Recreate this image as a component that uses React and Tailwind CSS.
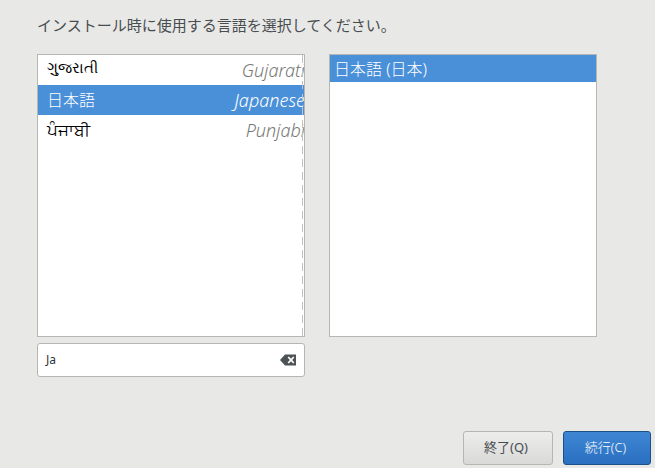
import React from "react";

function Row({ native, english, selected, nativeClass }) {
  return (
    <div className={`flex h-[30px] items-center justify-between overflow-hidden pl-[9px] ${selected ? "bg-[#4a90d9] text-white" : "bg-white text-black"}`}>
      <span className={`leading-none ${nativeClass}`}>{native}</span>
      <span className={`mr-[-1px] shrink-0 whitespace-nowrap text-[18px] font-light italic leading-none ${selected ? "text-white" : "text-[#777976]"}`}>{english}</span>
    </div>
  );
}

export default function App() {
  return (
    <div className="flex h-[468px] w-[655px] flex-col overflow-hidden bg-[#e8e8e7] font-['Noto_Sans','Noto_Sans_CJK_JP',sans-serif]">
      <p className="ml-[37px] mt-[15px] h-[20px] text-[15px] leading-[20px] text-[#484d4f]">インストール時に使用する言語を選択してください。</p>
      <div className="ml-[37px] mt-[19px] flex items-start gap-[24px]">
        <div className="flex w-[268px] flex-col gap-[6px]">
          <div className="relative h-[283px] overflow-hidden border border-[#b6b6b3] bg-white">
            <Row native="ગુજરાતી" english="Gujarati" nativeClass="mb-[5px] text-[15px]" />
            <Row native="日本語" english="Japanese" selected nativeClass="mb-[1px] text-[16px] font-light" />
            <Row native="ਪੰਜਾਬੀ" english="Punjabi" nativeClass="mb-[1px] text-[17px]" />
            <div className="absolute bottom-0 right-[1px] top-0 w-[1px] bg-[repeating-linear-gradient(to_bottom,#c2c2c0_0,#c2c2c0_8px,transparent_8px,transparent_13px)]" />
          </div>
          <div className="flex h-[34px] items-center justify-between rounded-[3px] border border-[#b6b6b3] bg-white pl-[8px] pr-[8px]">
            <span className="text-[12px] text-[#2e3436]">Ja</span>
            <svg width="16" height="12" viewBox="0 0 16 12" aria-hidden="true">
              <path fillRule="evenodd" fill="#2e3436" opacity="0.85" d="M5 0.5H16V11.5H5L0 6ZM7.6 3.4L9.9 6L7.6 8.6L8.9 9.6L11 7.3L13.1 9.6L14.4 8.6L12.1 6L14.4 3.4L13.1 2.4L11 4.7L8.9 2.4Z" />
            </svg>
          </div>
        </div>
        <div className="h-[283px] w-[268px] border border-[#b6b6b3] bg-white">
          <div className="flex h-[27px] items-center bg-[#4a90d9] pl-[4px] text-[16px] font-light text-white">日本語 (日本)</div>
        </div>
      </div>
      <div className="mt-[54px] flex justify-end gap-[10px] pr-[4px]">
        <button className="h-[34px] w-[90px] rounded-[3px] border border-[#b6b6b3] bg-gradient-to-b from-[#ededec] to-[#d9d9d7] pr-[4px] text-[13px] text-[#484d4f]">終了(Q)</button>
        <button className="h-[34px] w-[88px] rounded-[3px] border border-[#1c5187] bg-gradient-to-b from-[#3f87d5] to-[#2a6fc0] pr-[3px] text-[13px] font-light text-white">続行(C)</button>
      </div>
    </div>
  );
}
